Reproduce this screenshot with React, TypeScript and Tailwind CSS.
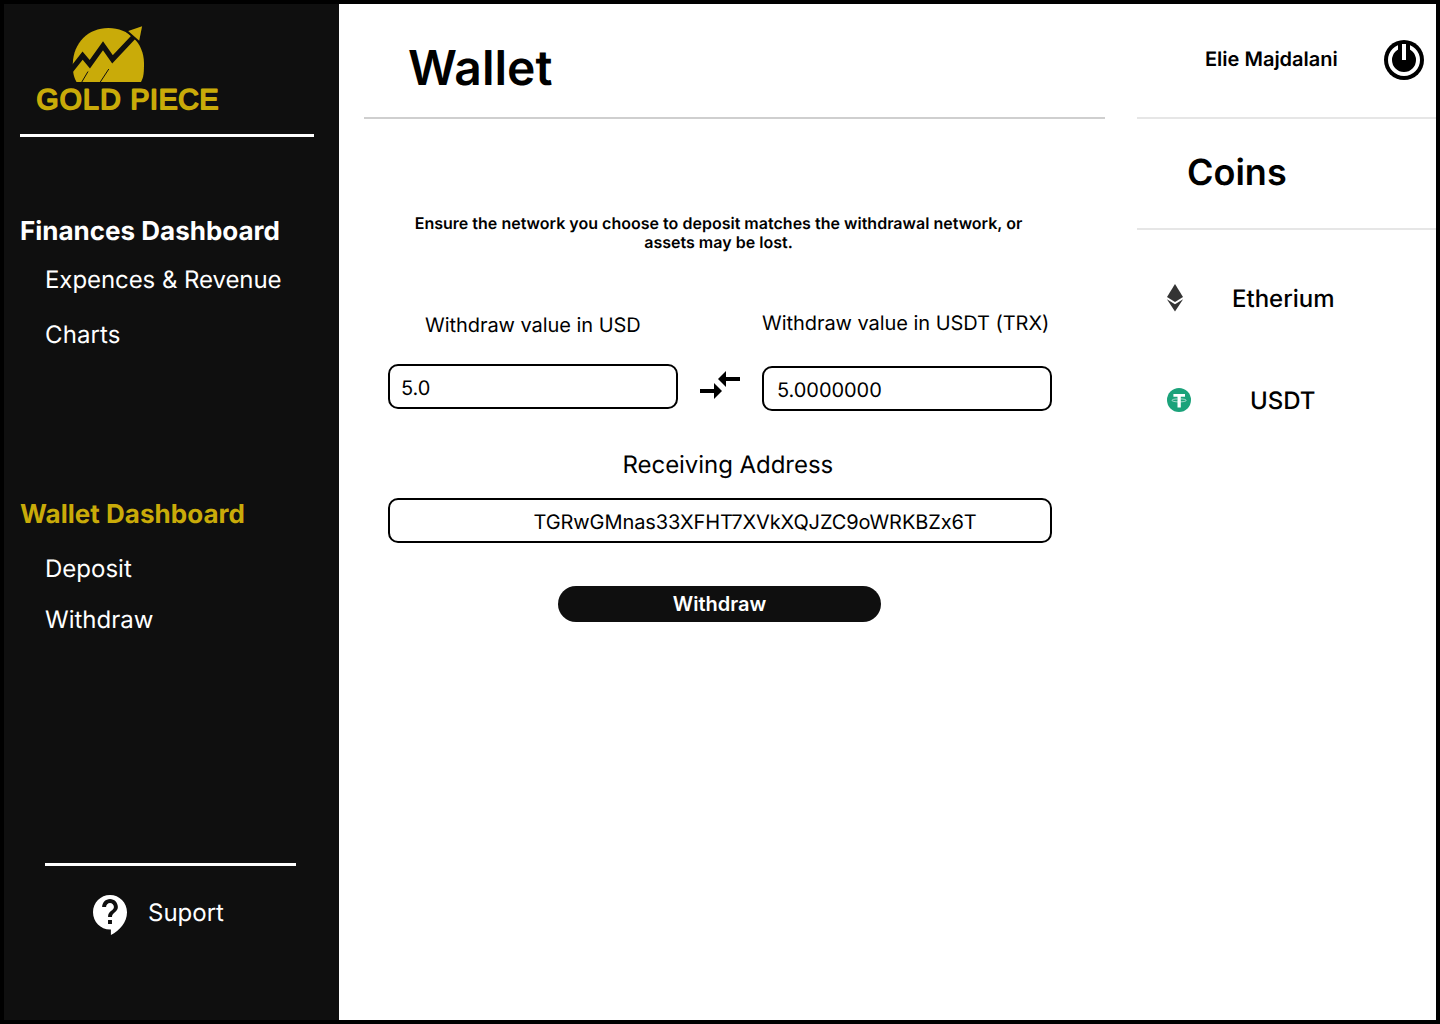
function Logo() {
  return (
    <svg width="190" height="92" viewBox="32 24 190 92" className="ml-7 mt-5 block">
      <path d="M76.5 82C73.5 76.5 72.8 72 72.8 63.5C73.5 43 88 28 108.4 28C129 28 143.5 43 144 62.5C144 72 143.8 77 141 82Z" fill="#c9ab09" />
      <path d="M70.5 71L82.6 55.6L89.8 64.2L103 45.8L112.5 59.3L134.5 36" fill="none" stroke="#0f0f0f" strokeWidth="5.2" />
      <path d="M125.5 31.5L139.5 43.5L142 25Z" fill="#0f0f0f" />
      <path d="M128.2 30.9L142.1 26.3L139.2 40.8Z" fill="#c9ab09" />
      <path d="M81.8 82L88 71.5M100.3 82L108.8 69" stroke="#0f0f0f" strokeWidth="1" />
      <g fill="#c9ab09" stroke="#c9ab09" strokeWidth="1.9" strokeLinejoin="round" fontSize="28.3" fontFamily="Liberation Sans, sans-serif">
        <text x="36.4" y="109.4" textLength="84.2" lengthAdjust="spacing">GOLD</text>
        <text x="130.4" y="109.4" textLength="88" lengthAdjust="spacing">PIECE</text>
      </g>
    </svg>
  );
}

function PowerIcon() {
  return (
    <svg width="40" height="40" viewBox="0 0 40 40">
      <circle cx="20" cy="20" r="20" fill="#000" />
      <circle cx="20" cy="20" r="14" fill="none" stroke="#fff" strokeWidth="4" />
      <path d="M14 2.5H26V12H14Z" fill="#000" />
      <path d="M20 4V20" stroke="#fff" strokeWidth="4" />
    </svg>
  );
}

function EthIcon() {
  return (
    <svg width="18" height="28" viewBox="0 0 18 28" fill="#343434">
      <path d="M9 0L17 13L9 18L1 13Z" />
      <path d="M0.9 15.2L9 20.3L17.1 15.2L9 27.4Z" />
    </svg>
  );
}

function TetherIcon() {
  return (
    <svg width="24" height="24" viewBox="0 0 24 24">
      <circle cx="12" cy="12" r="12" fill="#1ba27a" />
      <path d="M6.4 6H18V8.8H13.8V19.5H10.5V8.8H6.4Z" fill="#fff" />
      <path d="M10.5 10.9C7 11 5 11.6 5 12.4S8 13.9 12.1 13.9S19.2 13.2 19.2 12.4S17 11 13.8 10.9" fill="none" stroke="#fff" strokeWidth="0.6" />
    </svg>
  );
}

function SwapIcon() {
  return (
    <svg width="40" height="28" viewBox="0 0 40 28" fill="#000">
      <path d="M0 18H14V12L22 20L14 28V22H0Z" />
      <path d="M40 6H26V0L18 8L26 16V10H40Z" />
    </svg>
  );
}

function SupportIcon() {
  return (
    <svg width="34" height="40" viewBox="2 2 19 22" preserveAspectRatio="none" fill="#fff">
      <path d="M11.5 2C6.26 2 2 6.26 2 11.5S6.26 21 11.5 21h.5v3c4.86-2.34 9-7 9-12.5C21 6.26 16.74 2 11.5 2z" />
      <path d="M12.5 16.5h-2v-2h2zM12.5 13h-2c0-3.25 3-3 3-5 0-1.1-.9-2-2-2s-2 .9-2 2h-2c0-2.21 1.79-4 4-4s4 1.79 4 4c0 2.5-3 2.75-3 5z" transform="translate(11.5 4.2) scale(1.1) translate(-11.5 -4)" fill="#0f0f0f" />
    </svg>
  );
}

function Sidebar() {
  return (
    <aside className="flex w-[335px] shrink-0 flex-col bg-[#0f0f0f] text-white">
      <Logo />
      <div className="ml-4 mt-[18px] h-[3px] w-[294px] bg-white" />
      <h2 className="ml-4 mt-[79px] text-[26px] font-bold leading-8 whitespace-nowrap">Finances Dashboard</h2>
      <nav className="ml-[41px] flex flex-col text-2xl leading-[30px]">
        <a className="mt-[17px] tracking-[-0.07px]">Expences &amp; Revenue</a>
        <a className="mt-[25px] tracking-[0.1px]">Charts</a>
      </nav>
      <h2 className="ml-4 mt-[149px] text-[26px] font-bold leading-8 tracking-[0.03px] text-[#c9ab09]">Wallet Dashboard</h2>
      <nav className="ml-[41px] flex flex-col text-2xl leading-[30px]">
        <a className="mt-[23px]">Deposit</a>
        <a className="mt-[21px]">Withdraw</a>
      </nav>
      <div className="ml-[41px] mt-[228px] h-[3px] w-[251px] bg-white" />
      <div className="ml-[89px] mt-[29px] flex items-start">
        <SupportIcon />
        <span className="ml-[21px] mt-[3px] text-2xl leading-[30px]">Suport</span>
      </div>
    </aside>
  );
}

function WalletPanel() {
  return (
    <main className="w-[798px] shrink-0">
      <header className="ml-[25px] h-[115px] w-[741px] border-b-2 border-[#cfcfcf] pl-11 pt-[34px]">
        <h1 className="text-5xl font-semibold leading-[60px]">Wallet</h1>
      </header>
      <p className="ml-[49px] mt-[95px] w-[661px] text-center text-base font-semibold leading-[19px] tracking-[0.015px]">
        Ensure the network you choose to deposit matches the withdrawal network, or<br />assets may be lost.
      </p>
      <div className="ml-[49px] mt-[59px] flex text-xl leading-6 tracking-[-0.05px]">
        <div className="w-[290px]">
          <label className="mt-[2px] block pl-[37px]">Withdraw value in USD</label>
          <div className="mt-[27px] h-[45px] rounded-[10px] border-2 border-black pl-[11px] pt-[10px]">5.0</div>
        </div>
        <div className="ml-[22px] mt-[60px] w-10"><SwapIcon /></div>
        <div className="ml-[22px] w-[290px]">
          <label className="block whitespace-nowrap">Withdraw value in USDT (TRX)</label>
          <div className="mt-[31px] h-[45px] rounded-[10px] border-2 border-black pl-[13px] pt-[10px]">5.0000000</div>
        </div>
      </div>
      <p className="ml-[283.5px] mt-[39px] text-2xl leading-[30px] tracking-[-0.05px]">Receiving Address</p>
      <div className="ml-[49px] mt-[18px] h-[45px] w-[664px] rounded-[10px] border-2 border-black pl-[143.5px] pt-[10px] text-xl leading-6 tracking-[-0.09px]">TGRwGMnas33XFHT7XVkXQJZC9oWRKBZx6T</div>
      <button className="ml-[219px] mt-[43px] block h-9 w-[323px] rounded-full bg-[#0f0f0f] text-center text-xl font-semibold leading-9 text-white">Withdraw</button>
    </main>
  );
}

function CoinsPanel() {
  return (
    <section className="flex-1">
      <header className="flex h-[115px] items-start border-b-2 border-[#e6e6e6] pl-[68px] pt-9">
        <span className="mt-[7px] w-[179px] text-xl font-semibold leading-6 whitespace-nowrap">Elie Majdalani</span>
        <PowerIcon />
      </header>
      <h2 className="h-[111px] border-b-2 border-[#e6e6e6] pl-[50px] pt-[31px] text-4xl font-semibold leading-[44px]">Coins</h2>
      <div className="ml-[29px] mt-[54px] flex items-start text-2xl font-medium leading-[30px]">
        <EthIcon />
        <span className="ml-12">Etherium</span>
      </div>
      <div className="ml-[30px] mt-[72px] flex items-start text-2xl font-medium leading-[30px]">
        <span className="mt-[2px]"><TetherIcon /></span>
        <span className="ml-[59px]">USDT</span>
      </div>
    </section>
  );
}

export default function App() {
  return (
    <div className="flex h-[1024px] w-[1440px] overflow-hidden border-4 border-black bg-white font-['Inter',sans-serif] text-black [text-rendering:geometricPrecision]">
      <Sidebar />
      <WalletPanel />
      <CoinsPanel />
    </div>
  );
}
